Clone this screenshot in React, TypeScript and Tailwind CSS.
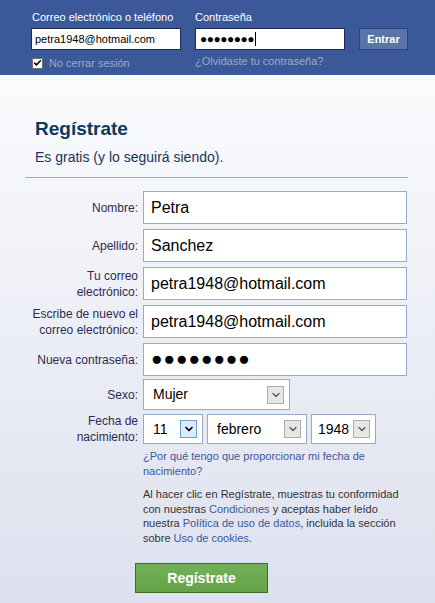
import { Check, ChevronDown } from "lucide-react";

const font = { fontFamily: '"Liberation Sans", Arial, sans-serif' };

function Arrow({ focused }: { focused?: boolean }) {
  return (
    <span
      className={`w-[17px] h-[18px] shrink-0 flex items-center justify-center border ${
        focused ? "bg-[#dcebfc] border-[#6d9fd8] text-black" : "bg-[#e6e6e6] border-[#acacac] text-[#555]"
      }`}
    >
      <ChevronDown className="w-3 h-3" strokeWidth={focused ? 3.5 : 2.5} />
    </span>
  );
}

function Select({ value, width, focused, pad = "pl-[9px]" }: { value: string; width: string; focused?: boolean; pad?: string }) {
  return (
    <div
      className={`${width} ${pad} h-[30px] bg-white border border-[#98a9ca] flex items-center justify-between pr-[5px] text-[14px] text-black`}
    >
      <span>{value}</span>
      <Arrow focused={focused} />
    </div>
  );
}

function Row({ label, value, big }: { label: React.ReactNode; value: string; big?: boolean }) {
  return (
    <div className="flex items-center gap-[5px]">
      <div className="w-[113px] text-right text-[12px] leading-[16px] text-[#2e2a52]">{label}</div>
      <div
        className={`w-[264px] h-[33px] bg-white border border-[#98a9ca] flex items-center px-[7px] text-black ${
          big ? "text-[19px] tracking-[1px]" : "text-[16px]"
        }`}
      >
        {value}
      </div>
    </div>
  );
}

export default function App() {
  return (
    <div
      className="w-[435px] h-[603px] overflow-hidden bg-gradient-to-b from-white to-[#dde1ee]"
      style={font}
    >
      {/* Header */}
      <div className="h-[75px] bg-[#3b5998] pl-[31px] pt-[10px] flex gap-[14px]">
        <div className="w-[150px]">
          <div className="text-[11px] leading-[14px] text-white pl-[1px]">Correo electrónico o teléfono</div>
          <div className="mt-[4px] h-[22px] bg-white border border-[#1d2a5b] px-[3px] flex items-center text-[11px] text-black">
            petra1948@hotmail.com
          </div>
          <div className="mt-[5px] flex items-center gap-[6px] pl-[1px]">
            <span className="w-[11px] h-[11px] bg-white border border-[#6f6f6f] flex items-center justify-center">
              <Check className="w-[10px] h-[10px] text-black" strokeWidth={4} />
            </span>
            <span className="text-[11px] text-[#98a9ca]">No cerrar sesión</span>
          </div>
        </div>
        <div className="w-[150px]">
          <div className="text-[11px] leading-[14px] text-white">Contraseña</div>
          <div className="mt-[4px] h-[22px] bg-white border border-[#1d2a5b] px-[4px] flex items-center text-[12px] text-black tracking-[-0.5px]">
            ●●●●●●●●<span className="w-px h-[14px] bg-black ml-[1px]" />
          </div>
          <div className="mt-[5px] text-[11px] text-[#98a9ca] leading-[13px]">¿Olvidaste tu contraseña?</div>
        </div>
        <div className="pt-[18px]">
          <div className="w-[49px] h-[22px] bg-[#5b74a8] border border-[#29447e] flex items-center justify-center text-[11px] font-bold text-white">
            Entrar
          </div>
        </div>
      </div>

      {/* Registration */}
      <div className="pl-[25px] pt-[42px]">
        <div className="pl-[10px]">
          <h1 className="text-[19px] font-bold text-[#0e385f] leading-[24px]">Regístrate</h1>
          <p className="mt-[7px] text-[14px] text-[#203360] leading-[18px]">Es gratis (y lo seguirá siendo).</p>
        </div>
        <div className="mt-[11px] w-[383px] h-px bg-[#9aafca]" />

        <div className="mt-[13px] flex flex-col gap-[5px]">
          <Row label="Nombre:" value="Petra" />
          <Row label="Apellido:" value="Sanchez" />
          <Row label={<>Tu correo<br />electrónico:</>} value="petra1948@hotmail.com" />
          <Row label={<>Escribe de nuevo el<br />correo electrónico:</>} value="petra1948@hotmail.com" />
          <Row label="Nueva contraseña:" value="●●●●●●●●" big />

          <div className="flex items-center gap-[5px] -mt-[2px]">
            <div className="w-[113px] text-right text-[12px] text-[#2e2a52]">Sexo:</div>
            <div className="h-[31px] flex">
              <Select value="Mujer" width="w-[147px] !h-[31px]" />
            </div>
          </div>

          <div className="flex items-center gap-[5px] -mt-[2px]">
            <div className="w-[113px] text-right text-[12px] leading-[16px] text-[#2e2a52]">
              Fecha de<br />nacimiento:
            </div>
            <div className="flex gap-[4px]">
              <Select value="11" width="w-[60px]" focused />
              <Select value="febrero" width="w-[100px]" />
              <Select value="1948" width="w-[65px]" pad="pl-[6px]" />
            </div>
          </div>
        </div>

        <div className="ml-[118px] mt-[4px] w-[240px] text-[11px] leading-[15px] text-[#3b5998]">
          ¿Por qué tengo que proporcionar mi fecha de nacimiento?
        </div>

        <div className="ml-[118px] mt-[8px] w-[260px] text-[11px] leading-[14.5px] text-[#333]">
          Al hacer clic en Regístrate, muestras tu conformidad con nuestras{" "}
          <span className="text-[#3b5998]">Condiciones</span> y aceptas haber leído nuestra{" "}
          <span className="text-[#3b5998]">Política de uso de datos</span>, incluida la sección sobre{" "}
          <span className="text-[#3b5998]">Uso de cookies</span>.
        </div>

        <div className="ml-[110px] mt-[18px] w-[133px] h-[30px] bg-gradient-to-b from-[#74b05a] to-[#64a346] border border-[#3b6e22] flex items-center justify-center text-[14px] font-bold text-white">
          Regístrate
        </div>
      </div>
    </div>
  );
}
